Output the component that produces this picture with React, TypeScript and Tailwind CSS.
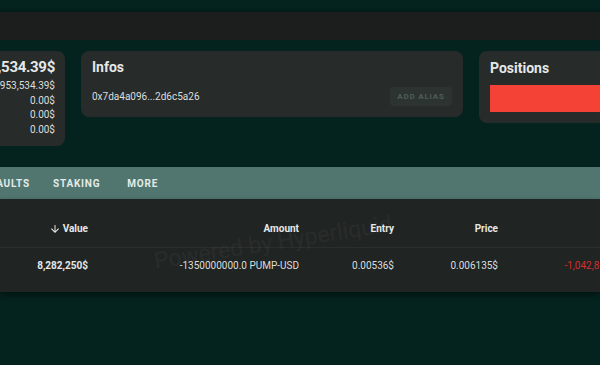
import React from "react";

const font = { fontFamily: "Roboto, 'Liberation Sans', sans-serif" };

function ArrowDown() {
  return (
    <svg viewBox="0 0 24 24" className="w-[12px] h-[12px] mr-[2px]" fill="currentColor">
      <path d="M20 12l-1.41-1.41L13 16.17V4h-2v12.17l-5.58-5.59L4 12l8 8 8-8z" />
    </svg>
  );
}

export default function App() {
  return (
    <div className="w-[600px] h-[365px] overflow-hidden bg-[#04231e] text-[#e6e8e7]" style={font}>
      <div className="pt-[12px]">
        <div className="h-[28px] bg-[#1b1e1d] shadow-[0_-2px_3px_rgba(0,0,0,0.25)]"></div>
      </div>

      {/* cards row */}
      <div className="mt-[11px] flex items-start gap-[16px] -ml-[116px] w-[900px]">
        <div className="w-[181px] rounded-lg bg-[#272b2a] pt-[8px] pb-[9px] pl-[12px] pr-[10px] text-right">
          <div className="text-[15px] leading-[16px] font-bold tracking-[-0.02em] whitespace-nowrap">7,953,534.39$</div>
          <div className="mt-[4px] text-[10px] leading-[14.5px] text-[#dcdedd]">
            <div className="flex justify-between"><span>Perps</span><span>7,953,534.39$</span></div>
            <div className="flex justify-between"><span>Spot</span><span>0.00$</span></div>
            <div className="flex justify-between"><span>Vaults</span><span>0.00$</span></div>
            <div className="flex justify-between"><span>Staking</span><span>0.00$</span></div>
          </div>
        </div>

        <div className="w-[382px] rounded-lg bg-[#272b2a] pt-[8px] pb-[11px] px-[11px]">
          <div className="text-[14px] leading-[16px] font-bold">Infos</div>
          <div className="mt-[12px] flex items-center justify-between">
            <span className="text-[10px] text-[#dcdedd]">0x7da4a096...2d6c5a26</span>
            <button className="h-[19px] w-[62px] rounded-[3px] bg-[#2d3331] text-[8px] font-bold tracking-[0.1em] text-[#4f5c59]">
              ADD ALIAS
            </button>
          </div>
        </div>

        <div className="w-[220px] rounded-lg bg-[#272b2a] pt-[8px] pb-[11px] px-[11px]">
          <div className="text-[14px] leading-[18px] font-bold">Positions</div>
          <div className="mt-[8px] h-[27px] bg-[#f44336]"></div>
        </div>
      </div>

      {/* tabs */}
      <div className="mt-[21px] h-[32px] bg-[#50766f] flex items-center text-[10px] font-bold tracking-[0.08em] text-[#e3ebe9]">
        <span className="w-[30px] flex justify-end whitespace-nowrap">VAULTS</span>
        <span className="ml-[23px]">STAKING</span>
        <span className="ml-[27px]">MORE</span>
      </div>

      {/* table */}
      <div className="relative h-[93px] bg-[#202423] shadow-[0_3px_6px_rgba(0,0,0,0.45)] overflow-hidden">
        <div className="flex items-center pt-[23px] pb-[11px] text-[10px] leading-[14px] font-bold border-b border-[#2a2f2e] w-[700px]">
          <div className="w-[88px] flex items-center justify-end"><ArrowDown />Value</div>
          <div className="w-[211px] text-right">Amount</div>
          <div className="w-[95px] text-right">Entry</div>
          <div className="w-[104px] text-right">Price</div>
          <div className="w-[132px] text-right">PnL</div>
        </div>
        <div className="flex items-center h-[34px] text-[10px] w-[700px]">
          <div className="w-[88px] text-right font-bold">8,282,250$</div>
          <div className="w-[211px] text-right text-[#dcdedd]">-1350000000.0 PUMP-USD</div>
          <div className="w-[95px] text-right text-[#dcdedd]">0.00536$</div>
          <div className="w-[104px] text-right text-[#dcdedd]">0.006135$</div>
          <div className="w-[132px] text-right text-[#d32f2f]">-1,042,850.00$</div>
        </div>
        <span className="absolute left-[153px] top-[27px] text-[23px] whitespace-nowrap text-white/[0.035] rotate-[-9deg] pointer-events-none">
          Powered by Hyperliquid
        </span>
      </div>
    </div>
  );
}
